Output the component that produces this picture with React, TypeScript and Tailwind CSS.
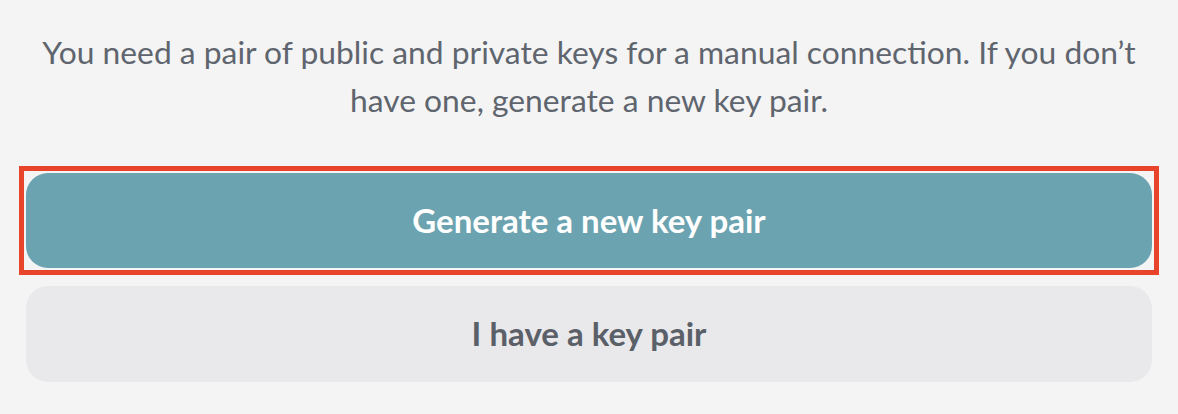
import React from 'react';

export default function App() {
  return (
    <div className="min-h-screen w-full bg-[#f4f4f4] px-[26px] pt-[28px] font-['Lato',sans-serif]">
      <p className="text-center text-[31.8px] leading-[48px] text-[#5f656e]">
        You need a pair of public and private keys for a manual connection. If you don’t have one, generate a new key pair.
      </p>

      <div className="mt-[49px] flex flex-col gap-[18px]">
        <div className="outline-[5px] outline-solid outline-[#e8442b] outline-offset-[2px]">
          <button className="flex h-[95px] w-full items-center justify-center rounded-[22px] bg-[#6ca3b0] text-[33px] font-bold text-white">
            Generate a new key pair
          </button>
        </div>
        <button className="flex h-[96px] w-full items-center justify-center rounded-[22px] bg-[#e9e9eb] text-[33px] font-bold text-[#5b6068]">
          I have a key pair
        </button>
      </div>
    </div>
  );
}
